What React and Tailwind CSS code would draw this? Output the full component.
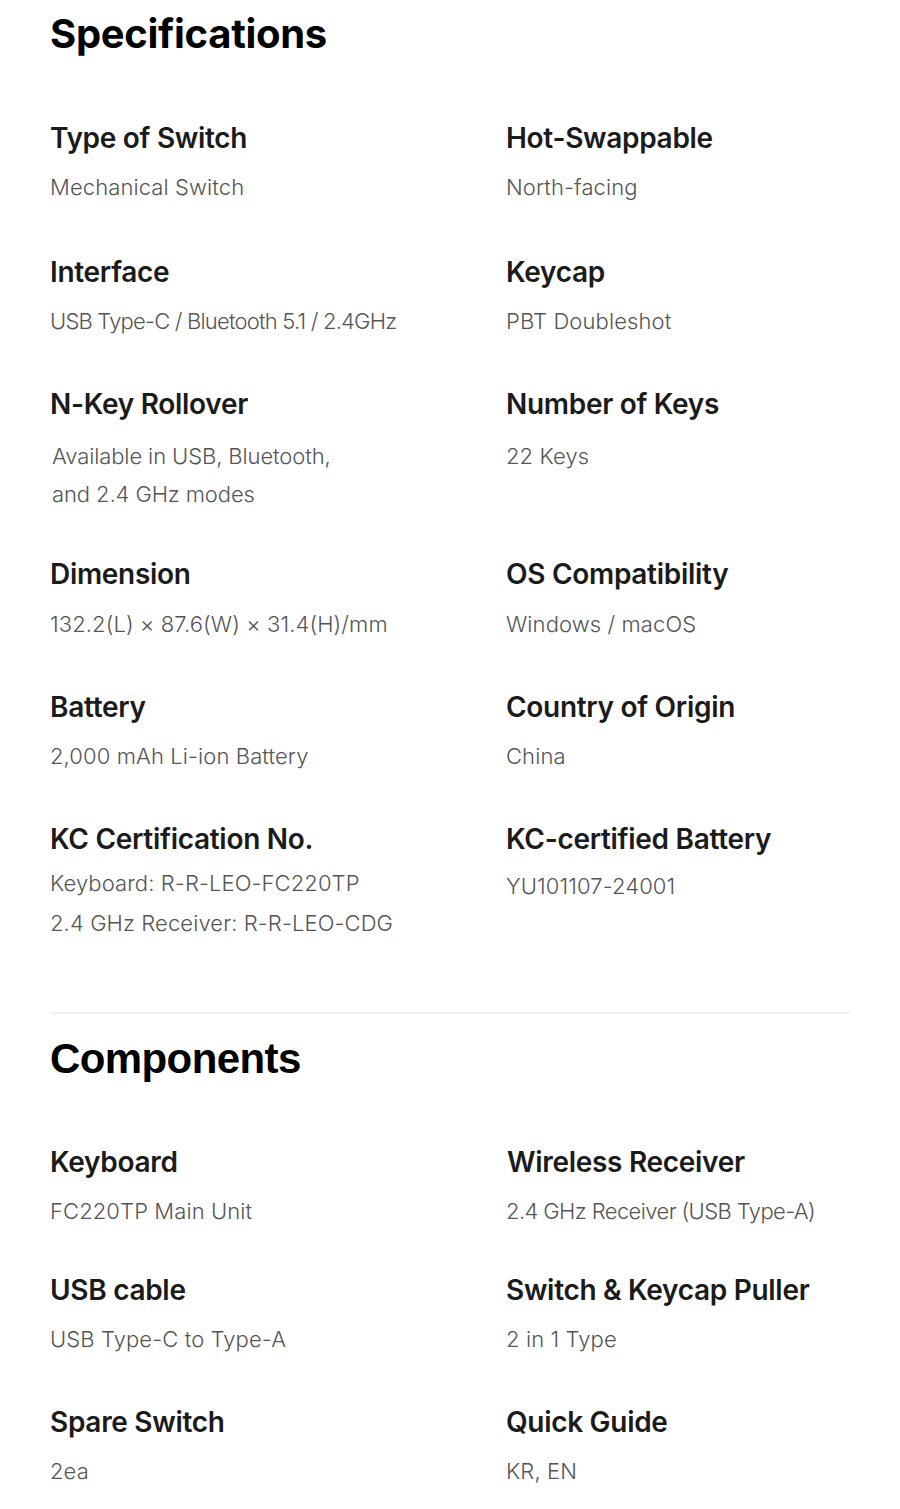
const SPECS = [
  {
    mt: 'mt-[64px]',
    cells: [
      { title: 'Type of Switch', lines: ['Mechanical Switch'], vt: 'mt-[14px]' },
      { title: 'Hot-Swappable', lines: ['North-facing'], vt: 'mt-[14px]' },
    ],
  },
  {
    mt: 'mt-[50px]',
    cells: [
      { title: 'Interface', lines: ['USB Type-C / Bluetooth 5.1 / 2.4GHz'], vt: 'mt-[14px]', track: 'tracking-[-0.8px]' },
      { title: 'Keycap', lines: ['PBT Doubleshot'], vt: 'mt-[14px]' },
    ],
  },
  {
    mt: 'mt-[48px]',
    cells: [
      { title: 'N-Key Rollover', lines: ['Available in USB, Bluetooth,', 'and 2.4 GHz modes'], vt: 'mt-[17px]', shift: true, track: 'tracking-[-0.1px]' },
      { title: 'Number of Keys', lines: ['22 Keys'], vt: 'mt-[17px]' },
    ],
  },
  {
    mt: 'mt-[45px]',
    cells: [
      { title: 'Dimension', lines: ['132.2(L) × 87.6(W) × 31.4(H)/mm'], vt: 'mt-[15px]' },
      { title: 'OS Compatibility', lines: ['Windows / macOS'], vt: 'mt-[15px]' },
    ],
  },
  {
    mt: 'mt-[48px]',
    cells: [
      { title: 'Battery', lines: ['2,000 mAh Li-ion Battery'], vt: 'mt-[14px]' },
      { title: 'Country of Origin', lines: ['China'], vt: 'mt-[14px]' },
    ],
  },
  {
    mt: 'mt-[48px]',
    cells: [
      { title: 'KC Certification No.', lines: ['Keyboard: R-R-LEO-FC220TP', '2.4 GHz Receiver: R-R-LEO-CDG'], vt: 'mt-[8px]', kc: true },
      { title: 'KC-certified Battery', lines: ['YU101107-24001'], vt: 'mt-[12px]' },
    ],
  },
]

const COMPONENTS = [
  {
    mt: 'mt-[63px]',
    cells: [
      { title: 'Keyboard', lines: ['FC220TP Main Unit'], vt: 'mt-[14px]' },
      { title: 'Wireless Receiver', lines: ['2.4 GHz Receiver (USB Type-A)'], vt: 'mt-[14px]', track: 'tracking-[-0.6px]', nudge: true },
    ],
  },
  {
    mt: 'mt-[44px]',
    cells: [
      { title: 'USB cable', lines: ['USB Type-C to Type-A'], vt: 'mt-[14px]' },
      { title: 'Switch & Keycap Puller', lines: ['2 in 1 Type'], vt: 'mt-[14px]' },
    ],
  },
  {
    mt: 'mt-[48px]',
    cells: [
      { title: 'Spare Switch', lines: ['2ea'], vt: 'mt-[14px]' },
      { title: 'Quick Guide', lines: ['KR, EN'], vt: 'mt-[14px]' },
    ],
  },
]

function SpecCell({ cell }) {
  return (
    <div className="flex flex-col">
      <h3
        className={`text-[28px] leading-[32px] font-semibold text-[#1b1b1b] tracking-[-0.3px] ${
          cell.nudge ? 'pl-[1px]' : ''
        }`}
      >
        {cell.title}
      </h3>
      <div
        className={`${cell.vt} text-[22px] font-light text-[#555555] ${cell.kc ? 'leading-[40px]' : 'leading-[38px]'} ${
          cell.track || 'tracking-[0.1px]'
        } ${cell.shift ? 'pl-[2px]' : ''}`}
      >
        {cell.lines.map(l => (
          <p key={l}>{l}</p>
        ))}
      </div>
    </div>
  )
}

function SpecRows({ rows }) {
  return rows.map((row, i) => (
    <div key={i} className={`grid grid-cols-[456px_1fr] ${row.mt}`}>
      {row.cells.map(c => (
        <SpecCell key={c.title} cell={c} />
      ))}
    </div>
  ))
}

export default function App() {
  return (
    <div
      className="w-[900px] min-h-[1509px] bg-white px-[50px] pt-[10px] pb-[19px]"
      style={{ fontFamily: 'Inter, "Noto Sans", sans-serif' }}
    >
      {/* Specifications */}
      <h2 className="text-[40px] leading-[48px] font-bold text-black tracking-[-0.3px]">Specifications</h2>
      <SpecRows rows={SPECS} />

      <div className="mt-[69px] h-[2px] bg-[#f0f0f0]" />

      {/* Components */}
      <h2
        className="mt-[21px] text-[42px] leading-[48px] font-bold text-black tracking-[-0.6px]"
        style={{ fontFamily: '"Liberation Sans", Arial, sans-serif' }}
      >
        Components
      </h2>
      <SpecRows rows={COMPONENTS} />
    </div>
  )
}
